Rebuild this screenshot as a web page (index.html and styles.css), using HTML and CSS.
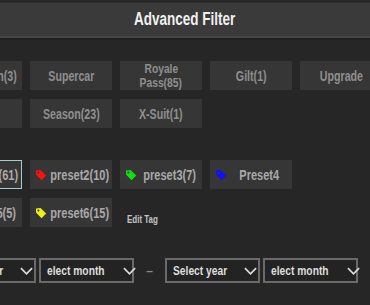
FILE: index.html
```html
<!DOCTYPE html>
<html>
<head>
<meta charset="utf-8">
<link rel="stylesheet" href="styles.css">
</head>
<body>
<div class="page">
  <header class="titlebar"><h1 class="title"><span class="t">Advanced Filter</span></h1></header>
  <div class="panel">
    <div class="grid cats">
      <div class="btn"><span class="t">Companion(3)</span></div>
      <div class="btn"><span class="t">Supercar</span></div>
      <div class="btn two"><span class="t">Royale</span><span class="t">Pass(85)</span></div>
      <div class="btn"><span class="t">Gilt(1)</span></div>
      <div class="btn"><span class="t">Upgrade</span></div>
      <div class="btn"><span class="t">Prime</span></div>
      <div class="btn"><span class="t">Season(23)</span></div>
      <div class="btn"><span class="t">X-Suit(1)</span></div>
    </div>
    <div class="grid presets">
      <div class="btn preset selected"><svg class="tag" viewBox="0 0 12 12"><path d="M1 1.5 L5.5 1 L11.2 6.5 L6.5 11.2 L1 5.5 Z" fill="#8f8f8f"/><circle cx="3.4" cy="3.4" r="1" fill="#363636"/></svg><span class="lbl"><span class="t">preset1(61)</span></span></div>
      <div class="btn preset"><svg class="tag" viewBox="0 0 12 12"><path d="M1 1.5 L5.5 1 L11.2 6.5 L6.5 11.2 L1 5.5 Z" fill="#ff1010"/><circle cx="3.4" cy="3.4" r="1" fill="#363636"/></svg><span class="lbl"><span class="t">preset2(10)</span></span></div>
      <div class="btn preset"><svg class="tag" viewBox="0 0 12 12"><path d="M1 1.5 L5.5 1 L11.2 6.5 L6.5 11.2 L1 5.5 Z" fill="#10e010"/><circle cx="3.4" cy="3.4" r="1" fill="#363636"/></svg><span class="lbl"><span class="t">preset3(7)</span></span></div>
      <div class="btn preset"><svg class="tag" viewBox="0 0 12 12"><path d="M1 1.5 L5.5 1 L11.2 6.5 L6.5 11.2 L1 5.5 Z" fill="#1010ff"/><circle cx="3.4" cy="3.4" r="1" fill="#363636"/></svg><span class="lbl"><span class="t">Preset4</span></span></div>
      <div class="empty"></div>
      <div class="btn preset"><svg class="tag" viewBox="0 0 12 12"><path d="M1 1.5 L5.5 1 L11.2 6.5 L6.5 11.2 L1 5.5 Z" fill="#8f8f8f"/><circle cx="3.4" cy="3.4" r="1" fill="#363636"/></svg><span class="lbl"><span class="t">preset5(5)</span></span></div>
      <div class="btn preset"><svg class="tag" viewBox="0 0 12 12"><path d="M1 1.5 L5.5 1 L11.2 6.5 L6.5 11.2 L1 5.5 Z" fill="#f0f010"/><circle cx="3.4" cy="3.4" r="1" fill="#363636"/></svg><span class="lbl"><span class="t">preset6(15)</span></span></div>
      <div class="edit"><span class="t">Edit Tag</span></div>
    </div>
    <div class="dates">
      <div class="select"><span class="t">Select year</span><svg class="chev" viewBox="0 0 14 8"><polyline points="1,1 7,7 13,1" fill="none" stroke="#dcdcdc" stroke-width="1.8"/></svg></div>
      <div class="select"><span class="t">elect month</span><svg class="chev" viewBox="0 0 14 8"><polyline points="1,1 7,7 13,1" fill="none" stroke="#dcdcdc" stroke-width="1.8"/></svg></div>
      <div class="dash">–</div>
      <div class="select"><span class="t">Select year</span><svg class="chev" viewBox="0 0 14 8"><polyline points="1,1 7,7 13,1" fill="none" stroke="#dcdcdc" stroke-width="1.8"/></svg></div>
      <div class="select"><span class="t">elect month</span><svg class="chev" viewBox="0 0 14 8"><polyline points="1,1 7,7 13,1" fill="none" stroke="#dcdcdc" stroke-width="1.8"/></svg></div>
    </div>
  </div>
</div>
</body>
</html>
```
FILE: styles.css
```css
html, body {
  margin: 0;
  padding: 0;
  background: #262626;
  overflow: hidden;
}
body {
  font-family: "Liberation Sans", Arial, sans-serif;
  font-weight: bold;
  width: 370px;
  height: 305px;
}
.page {
  width: 370px;
  height: 305px;
  overflow: hidden;
}
.t {
  display: inline-block;
  transform: scaleX(0.76);
  transform-origin: center;
  white-space: nowrap;
}
.titlebar {
  margin-top: 2px;
  height: 33px;
  background: #3a3a3a;
  border-top: 1px solid #2e2e2e;
  border-bottom: 2px solid #464646;
  box-shadow: 0 2px 0 #1f1f1f;
  display: flex;
  align-items: center;
  justify-content: center;
}
.title {
  margin: 0;
  font-size: 18px;
  color: #f0f0f0;
  font-weight: bold;
}
.title .t {
  transform: scaleX(0.75);
}
.panel {
  margin-left: -60px;
  width: 500px;
  padding-top: 23px;
}
.grid {
  display: grid;
  grid-template-columns: repeat(5, 82px);
  grid-auto-rows: 29px;
  gap: 9px 8px;
}
.btn {
  background: #363636;
  color: #8f8f8f;
  font-size: 14px;
  display: flex;
  align-items: center;
  justify-content: center;
  text-align: center;
  white-space: nowrap;
  box-sizing: border-box;
}
.btn.two {
  flex-direction: column;
  font-size: 13px;
  line-height: 14px;
}
.btn.two .t {
  height: 14px;
  line-height: 14px;
  transform: scaleX(0.79);
}
.presets {
  margin-top: 32px;
}
.preset {
  justify-content: flex-start;
  padding-left: 5px;
  color: #a9a9a9;
  font-size: 14.5px;
}
.lbl {
  flex: 1;
  min-width: 0;
  display: flex;
  justify-content: center;
}
.preset.selected {
  border: 1px solid #a6cccc;
  padding-left: 4px;
}
.tag {
  width: 12px;
  height: 12px;
  flex: none;
}
.edit {
  color: #c4c4c4;
  font-size: 10.5px;
  display: flex;
  align-items: flex-end;
  padding-left: 7px;
  padding-bottom: 2px;
}
.edit .t, .select .t {
  transform-origin: left center;
}
.dates {
  margin-top: 31px;
  display: flex;
  align-items: center;
  gap: 3px;
  margin-left: 1px;
}
.select {
  width: 95px;
  height: 25px;
  box-sizing: border-box;
  border: 2px solid #6a6a6a;
  background: #232323;
  display: flex;
  align-items: center;
  justify-content: space-between;
  padding: 0 5px 0 6px;
  color: #dedede;
  font-size: 13.5px;
  white-space: nowrap;
}
.chev {
  width: 13px;
  height: 8px;
  flex: none;
}
.dash {
  width: 25px;
  text-align: center;
  color: #8a8a8a;
  font-size: 12px;
}
```
